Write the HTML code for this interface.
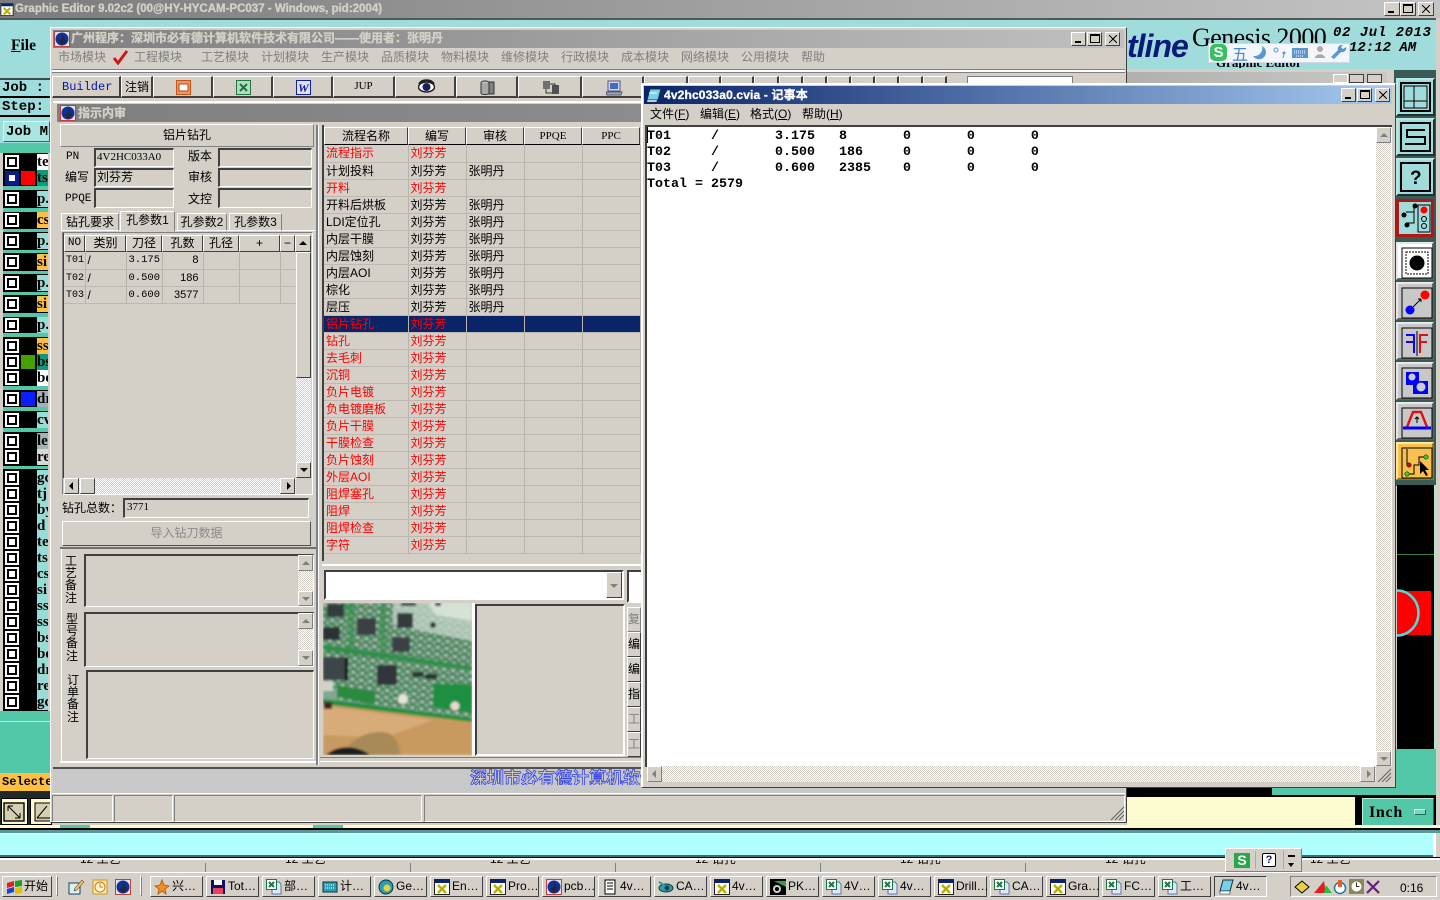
<!DOCTYPE html>
<html><head><meta charset="utf-8"><title>Graphic Editor</title>
<style>
html,body{margin:0;padding:0;width:1440px;height:900px;overflow:hidden;background:#d4d0c8}
body{position:relative;font:12px/14px "Liberation Sans","WenQuanYi Zen Hei","Noto Sans CJK SC",sans-serif;color:#000}
div,span,svg{position:absolute;box-sizing:border-box;white-space:nowrap}
.r{background:#d4d0c8;border:1px solid;border-color:#fff #404040 #404040 #fff}
.s{background:#d4d0c8;border:2px solid;border-color:#808080 #fff #fff #808080}
.sf{background:#d4d0c8;border:1px solid;border-color:#808080 #fff #fff #808080;border-top-width:2px;border-left-width:2px;border-top-color:#404040;border-left-color:#404040}
.d{background:repeating-conic-gradient(#d4d0c8 0 25%,#fff 0 50%) 0 0/2px 2px}
.g{color:#808080}
.tb{background:linear-gradient(90deg,#7f7f7f,#c0c0c0)}
.wb{width:16px;height:14px;background:#d4d0c8;border:1px solid;border-color:#fff #404040 #404040 #fff;text-align:center;color:#000}
.mn::after{content:"";position:absolute;left:3px;top:8px;width:6px;height:2px;background:#000}
.mx::after{content:"";position:absolute;left:2px;top:1px;width:10px;height:9px;box-sizing:border-box;border:1px solid #000;border-top-width:2px}
.cl{background:linear-gradient(45deg,transparent 44%,#000 44%,#000 56%,transparent 56%) 3px 2px/8px 8px no-repeat,linear-gradient(-45deg,transparent 44%,#000 44%,#000 56%,transparent 56%) 3px 2px/8px 8px no-repeat,#d4d0c8}
.lt{font:12px/14px "Liberation Mono","WenQuanYi Zen Hei","Noto Sans CJK SC",monospace}
.ser{font-family:"Liberation Serif","WenQuanYi Zen Hei",serif}
.bd{-webkit-text-stroke:.35px currentColor}
table{position:absolute;border-collapse:collapse;table-layout:fixed}
td{box-sizing:border-box;height:17px;padding:0 0 0 2px;border-right:1px solid #b8b4ac;border-bottom:1px solid #bdb9b1;font:12px/14px "Liberation Sans","WenQuanYi Zen Hei","Noto Sans CJK SC",sans-serif;overflow:hidden;white-space:nowrap}
tr.k td{color:#f00}
tr.sel td{background:#0a246a;color:#f00}
.cb{left:7px;width:10px;height:10px;background:#fff;border:2px solid #000;outline:2px solid #fff}
.lb{left:37px;width:11px;height:16px;overflow:hidden;font:bold 15px/16px "Liberation Serif",serif;color:#000}
.tq{background:#97dcd6}.or{background:#ffc040}.tg{background:#0e9a78}.wh{background:#fff}.gb{background:#a0b4b8}.lg{background:#d8d8d8}
.gap{left:3px;width:45px;background:#52c8a8}
.th{top:235px;height:17px;text-align:center;line-height:15px}
.m{top:50px;color:#808080}
.tbtn{top:76px;height:22px;background:#d4d0c8;border-right:2px solid #404040;border-bottom:2px solid #404040;border-left:1px solid #fff;border-top:1px solid #fff}
.tk{top:876px;width:53px;height:21px;background:#d4d0c8;border:1px solid;border-color:#fff #404040 #404040 #fff;font:12px/19px "Liberation Sans","WenQuanYi Zen Hei",sans-serif}
.tk b{position:absolute;left:21px;top:0;font-weight:normal}
.tk svg{left:3px;top:2px}
.ct{left:1396px;width:39px;height:38px;background:#5a9a96;border:2px solid;border-color:#b8e8e4 #203030 #203030 #b8e8e4}
.tool{left:1396px;width:38px;height:38px;border:2px solid;border-color:#e8e8e8 #606060 #606060 #e8e8e8;background:#c8c8c8}
.tool svg{left:2px;top:2px}
.sb{width:15px;background:#d4d0c8;border:1px solid;border-color:#fff #404040 #404040 #fff}
</style></head><body>
<svg width="0" height="0" style="display:none"><defs>
<symbol id="win" viewBox="0 0 16 16"><rect x=".5" y=".5" width="15" height="15" fill="#fff" stroke="#222"/><rect x="1" y="1" width="14" height="3" fill="#0a246a"/><path d="M4 6l8 8M12 6l-8 8" stroke="#b8b000" stroke-width="2.4"/></symbol>
<symbol id="xls" viewBox="0 0 16 16"><path d="M6 3h7l2 2v10H6z" fill="#dfe8f5" stroke="#5878b0"/><rect x="0.5" y="0.5" width="10" height="10" fill="#fff" stroke="#187840"/><path d="M3 3l5 5M8 3l-5 5" stroke="#187840" stroke-width="2"/></symbol>
<symbol id="globe" viewBox="0 0 16 16"><rect x=".5" y=".5" width="15" height="15" fill="#e8e0e0" stroke="#c04040"/><circle cx="8" cy="8" r="6.5" fill="#1030a0"/><path d="M6 2c2 1 3 3 2 5s-3 1-3 3 2 3 3 4c2-1 4-3 4-5-2-1-2-3-3-5z" fill="#202830"/></symbol>
</defs></svg>

<!-- main title bar -->
<div style="left:0;top:0;width:1440px;height:18px;background:linear-gradient(90deg,#7c7c7c,#c4c4c4)"></div>
<svg style="left:0;top:3px" width="14" height="13"><use href="#win"/></svg>
<div class="bd" style="left:15px;top:2px;font-weight:bold;font-size:11.5px;color:#d4d0c8">Graphic Editor 9.02c2 (00@HY-HYCAM-PC037 - Windows, pid:2004)</div>
<div class="wb mn" style="left:1384px;top:2px"></div><div class="wb mx" style="left:1400px;top:2px"></div><div class="wb cl" style="left:1418px;top:2px"></div>
<div style="left:0;top:18px;width:1440px;height:2px;background:#505858"></div>

<!-- teal app background -->
<div style="left:0;top:20px;width:1440px;height:50px;background:#a0dcdc"></div>
<div style="left:1436px;top:18px;width:4px;height:850px;background:#d4d0c8"></div>

<!-- left strip -->
<div style="left:0;top:20px;width:50px;height:58px;background:#9fdcdc"></div>
<div class="ser" style="left:11px;top:38px;font:bold 15.500px/16px 'Liberation Serif',serif"><u>F</u>ile</div>
<div style="left:0;top:72px;width:50px;height:80px;background:#9fdcdc"></div>
<div style="left:0;top:78px;width:50px;height:2px;background:#404848"></div>
<div style="left:0;top:96px;width:50px;height:2px;background:#000"></div>
<div style="left:0;top:115px;width:50px;height:2px;background:#000"></div>
<div style="left:2px;top:80px;font:bold 14px/16px 'Liberation Mono',serif">Job :</div>
<div style="left:2px;top:99px;font:bold 14px/16px 'Liberation Mono',serif">Step:</div>
<div style="left:3px;top:121px;width:47px;height:21px;background:#a8e4e0;border:1px solid;border-color:#d8f8f4 #406060 #406060 #d8f8f4;overflow:hidden;font:bold 14px/20px 'Liberation Mono',serif;padding-left:2px">Job Mgr</div>
<div style="left:0;top:143px;width:50px;height:10px;background:#52c8a8"></div>

<!-- layer list -->
<div style="left:3px;top:153px;width:45px;height:558px;background:#000"></div>
<div class="gap" style="top:186px;height:4px"></div><div class="gap" style="top:208px;height:4px"></div><div class="gap" style="top:229px;height:3px"></div><div class="gap" style="top:250px;height:3px"></div><div class="gap" style="top:271px;height:3px"></div><div class="gap" style="top:292px;height:3px"></div><div class="gap" style="top:313px;height:4px"></div><div class="gap" style="top:333px;height:4px"></div><div class="gap" style="top:386px;height:4px"></div><div class="gap" style="top:407px;height:4px"></div><div class="gap" style="top:428px;height:4px"></div><div class="gap" style="top:466px;height:3px"></div>
<div style="left:5px;top:171px;width:14px;height:14px;background:#0a1a90"></div>
<div class="cb" style="top:157px"></div><div class="lb wh" style="top:154px">te</div>
<div style="left:7px;top:173px;width:10px;height:10px;background:#fff;border:2px solid #0a1a90"></div><div style="left:21px;top:171px;width:14px;height:14px;background:#f00"></div><div class="lb tg" style="top:170px">ts</div>
<div class="cb" style="top:194px"></div><div class="lb tq" style="top:191px">p.</div>
<div class="cb" style="top:215px"></div><div class="lb or" style="top:212px">cs</div>
<div class="cb" style="top:236px"></div><div class="lb tq" style="top:233px">p.</div>
<div class="cb" style="top:257px"></div><div class="lb or" style="top:254px">si</div>
<div class="cb" style="top:278px"></div><div class="lb tq" style="top:275px">p.</div>
<div class="cb" style="top:299px"></div><div class="lb or" style="top:296px">si</div>
<div class="cb" style="top:320px"></div><div class="lb tq" style="top:317px">p.</div>
<div class="cb" style="top:341px"></div><div class="lb or" style="top:338px">ss</div>
<div class="cb" style="top:357px"></div><div style="left:21px;top:355px;width:14px;height:14px;background:#48a000"></div><div class="lb tg" style="top:354px">bs</div>
<div class="cb" style="top:373px"></div><div class="lb wh" style="top:370px">be</div>
<div class="cb" style="top:394px"></div><div style="left:21px;top:392px;width:14px;height:14px;background:#0820ff"></div><div class="lb gb" style="top:391px">dr</div>
<div class="cb" style="top:415px"></div><div class="lb tq" style="top:412px">cv</div>
<div class="cb" style="top:436px"></div><div class="lb gb" style="top:433px">le</div>
<div class="cb" style="top:452px"></div><div class="lb lg" style="top:449px">re</div>
<div class="cb" style="top:473px"></div><div class="lb tq" style="top:470px">gc</div>
<div class="cb" style="top:489px"></div><div class="lb tq" style="top:486px">tj</div>
<div class="cb" style="top:505px"></div><div class="lb tq" style="top:502px">by</div>
<div class="cb" style="top:521px"></div><div class="lb tq" style="top:518px">d</div>
<div class="cb" style="top:537px"></div><div class="lb tq" style="top:534px">te</div>
<div class="cb" style="top:553px"></div><div class="lb tq" style="top:550px">ts</div>
<div class="cb" style="top:569px"></div><div class="lb tq" style="top:566px">cs</div>
<div class="cb" style="top:585px"></div><div class="lb tq" style="top:582px">si</div>
<div class="cb" style="top:601px"></div><div class="lb tq" style="top:598px">ss</div>
<div class="cb" style="top:617px"></div><div class="lb tq" style="top:614px">ss</div>
<div class="cb" style="top:633px"></div><div class="lb tq" style="top:630px">bs</div>
<div class="cb" style="top:649px"></div><div class="lb tq" style="top:646px">be</div>
<div class="cb" style="top:665px"></div><div class="lb tq" style="top:662px">dr</div>
<div class="cb" style="top:681px"></div><div class="lb tq" style="top:678px">re</div>
<div class="cb" style="top:697px"></div><div class="lb tq" style="top:694px">gc</div>
<div style="left:0;top:711px;width:50px;height:62px;background:#52c8a8"></div>
<div style="left:0;top:721px;width:50px;height:1px;background:#c0f0e0"></div>
<div style="left:0;top:773px;width:50px;height:18px;background:#ffc040;font:bold 12px/18px 'Liberation Mono',serif;padding-left:2px;overflow:hidden">Selected</div>
<div style="left:0;top:791px;width:50px;height:36px;background:#202828"></div>
<div style="left:1px;top:798px;width:27px;height:27px;background:#fdfcd0;border:1px solid #000"></div>
<svg style="left:3px;top:802px" width="22" height="20"><rect x="1" y="1" width="20" height="18" fill="#d4cfb0" stroke="#000" stroke-width="1.4"/><path d="M5 4l12 12M5 4v5M5 4h5M17 16v-5M17 16h-5" fill="none" stroke="#000"/></svg>
<div style="left:30px;top:798px;width:22px;height:27px;background:#fdfcd0;border:1px solid #000"></div>
<svg style="left:34px;top:802px" width="18" height="20"><rect x="1" y="1" width="20" height="18" fill="#d4cfb0" stroke="#000"/><path d="M3 16L13 4M3 16h13" fill="none" stroke="#000"/></svg>

<!-- Genesis logo area -->
<div style="left:1127px;top:28px;font:italic bold 32px/36px 'Liberation Sans',sans-serif;color:#0a1a78;letter-spacing:-1px">tline</div>
<div style="left:1192px;top:23px;font:26px/30px 'Liberation Serif',serif;letter-spacing:-.55px">Genesis 2000</div>
<div style="left:1333px;top:25px;font:italic bold 14px/16px 'Liberation Mono',monospace;letter-spacing:.55px">02 Jul 2013</div>
<div style="left:1349px;top:40px;font:italic bold 14px/16px 'Liberation Mono',monospace">12:12 AM</div>
<div style="left:1216px;top:56px;height:12px;width:90px;font:bold 13px/15px 'Liberation Serif',serif;overflow:hidden"><span style="top:-1px;left:0">Graphic Editor</span></div>
<div style="left:1208px;top:43px;width:142px;height:20px;background:#f3f7fc;border:1px solid #d0d8e8"></div>
<div style="left:1210px;top:44px;width:17px;height:17px;border-radius:5px;background:#38c060;color:#fff;font:bold 15px/17px 'Liberation Sans',sans-serif;text-align:center">S</div>
<div style="left:1232px;top:44px;font:16px/18px 'WenQuanYi Zen Hei','Noto Sans CJK SC',sans-serif;color:#4a88c8">五</div>
<svg style="left:1252px;top:45px" width="96" height="16"><path d="M10 1a7 7 0 1 1-9 10a8 8 0 0 0 9-10z" fill="#5a96d2"/><circle cx="24" cy="5" r="2" fill="none" stroke="#5a96d2"/><circle cx="32" cy="8" r="1.5" fill="#5a96d2"/><path d="M32 9l-1 4" stroke="#5a96d2"/><rect x="40" y="3" width="16" height="10" fill="#5a96d2"/><path d="M42 6h12M42 8h12M44 11h8" stroke="#fff" stroke-dasharray="1 1"/><circle cx="68" cy="4" r="3" fill="#aaa"/><path d="M63 13c0-5 10-5 10 0z" fill="#aaa"/><path d="M82 14l7-7a4 4 0 0 0 5-5l-3 2-2-2 2-2a4 4 0 0 0-5 5l-7 7z" fill="#5a96d2"/></svg>

<!-- right toolbar column -->
<div style="left:1394px;top:70px;width:42px;height:416px;background:#3a5a58"></div>
<div class="ct" style="top:78px;background:#a0dcdc"><svg width="35" height="34"><rect x="3" y="3" width="29" height="28" fill="none" stroke="#000" stroke-width="2"/><rect x="6" y="6" width="23" height="22" fill="none" stroke="#000"/><path d="M16 6v22M6 21h23" stroke="#000"/></svg></div>
<div class="ct" style="top:118px;background:#a0dcdc"><svg width="35" height="34"><rect x="3" y="3" width="29" height="28" fill="none" stroke="#000" stroke-width="2"/><path d="M27 10H9v7h18v7H7" fill="none" stroke="#000" stroke-width="2"/></svg></div>
<div class="ct" style="top:158px;background:#a0dcdc"><svg width="35" height="34"><rect x="3" y="3" width="29" height="28" fill="none" stroke="#000" stroke-width="2"/><text x="12" y="24" font-size="19" font-weight="bold" font-family="Liberation Sans">?</text></svg></div>
<div style="left:1396px;top:199px;width:38px;height:38px;background:#b01818"><div style="left:3px;top:3px;width:32px;height:32px;background:#a0dcdc"></div><svg width="38" height="38"><path d="M18 6v18h-8M10 13h8" fill="none" stroke="#000"/><circle cx="19" cy="7" r="2.5"/><circle cx="8" cy="16" r="2.5"/><circle cx="11" cy="26" r="2.5"/><rect x="22" y="6" width="12" height="27" fill="none" stroke="#000"/><circle cx="28" cy="11" r="3.5" fill="#f00"/><circle cx="28" cy="20" r="2.5" fill="none" stroke="#000"/><circle cx="28" cy="27" r="2.5" fill="none" stroke="#000"/></svg></div>
<div class="tool" style="top:242px;background:#fff"><svg width="34" height="34"><rect x="2" y="2" width="30" height="30" fill="none" stroke="#000"/><rect x="6" y="6" width="22" height="22" fill="none" stroke="#000" stroke-dasharray="2 1"/><circle cx="17" cy="17" r="7.5"/></svg></div>
<div class="tool" style="top:282px"><svg width="34" height="34"><rect x="2" y="2" width="30" height="30" fill="none" stroke="#000"/><circle cx="25" cy="9" r="4.5" fill="#f00"/><circle cx="10" cy="24" r="4.5" fill="#00f"/><path d="M13 21l8-8M21 13h-3M21 13v3" fill="none" stroke="#000"/></svg></div>
<div class="tool" style="top:322px"><svg width="34" height="34"><rect x="2" y="2" width="30" height="30" fill="none" stroke="#000"/><path d="M6 9h9M6 16h9M14 9v18" fill="none" stroke="#10f" stroke-width="2"/><path d="M28 9H20v18M20 16h7" fill="none" stroke="#e01010" stroke-width="2"/><path d="M17 5v25" stroke="#000"/></svg></div>
<div class="tool" style="top:362px"><svg width="34" height="34"><rect x="2" y="2" width="30" height="30" fill="none" stroke="#000"/><path d="M6 6h13v9h9v13H13v-9H6z" fill="#00f"/><circle cx="12" cy="11" r="3.5" fill="#ccc"/><circle cx="21" cy="21" r="4.5" fill="#ccc"/></svg></div>
<div class="tool" style="top:402px"><svg width="34" height="34"><rect x="2" y="2" width="30" height="30" fill="none" stroke="#000"/><path d="M7 21L13 6h8l6 15" fill="none" stroke="#e01010" stroke-width="2.4"/><path d="M3 22h28" stroke="#00f" stroke-width="3"/><path d="M17 17v-6M15 13l2-2 2 2" fill="none" stroke="#000"/></svg></div>
<div class="tool" style="top:442px;background:#f8c050;border-color:#ffe8a0 #a07020 #a07020 #ffe8a0"><svg width="34" height="34"><rect x="2" y="2" width="30" height="30" fill="none" stroke="#000"/><path d="M7 3v16M7 28h7v-9h5v-8h6" fill="none" stroke="#000"/><circle cx="9" cy="19" r="2.2" fill="#c01010" stroke="#000" stroke-width=".5"/><circle cx="7" cy="28" r="2.2" fill="#30d030" stroke="#000" stroke-width=".5"/><circle cx="26" cy="11" r="2.2" fill="#30d030" stroke="#000" stroke-width=".5"/><path d="M20 15l0 13 3-3 3 5 2-1-3-5 4 0z"/></svg></div>
<div style="left:1397px;top:485px;width:37px;height:264px;background:#000"></div>
<div style="left:1434px;top:485px;width:2px;height:264px;background:#a8e8d0"></div>
<div style="left:1397px;top:554px;width:37px;height:1px;background:#3a7a40"></div>
<div style="left:1397px;top:591px;width:34px;height:44px;background:#f00"></div>
<svg style="left:1397px;top:588px" width="24" height="50"><path d="M0 2.500a21 22 0 0 1 0 45" fill="none" stroke="#50d8e0" stroke-width="2.500"/></svg>
<div style="left:1396px;top:749px;width:40px;height:46px;background:#52c8a8"></div>

<!-- bottom right -->
<div style="left:1127px;top:787px;width:145px;height:8px;background:#000"></div>
<div style="left:1272px;top:787px;width:164px;height:8px;background:#52c8a8"></div>
<div style="left:1127px;top:795px;width:309px;height:33px;background:#000"></div>
<div style="left:1127px;top:797px;width:228px;height:31px;background:#fdfcd0"></div>
<div style="left:1362px;top:798px;width:72px;height:28px;background:#52c8a8;border:1px solid;border-color:#b8f0e0 #206858 #206858 #b8f0e0;font:bold 16px/28px 'Liberation Serif',serif;padding-left:6px;letter-spacing:.7px">Inch</div>
<div style="left:1414px;top:809px;width:12px;height:6px;background:#78d8c0;border:1px solid;border-color:#c8f8e8 #206858 #206858 #c8f8e8"></div>

<!-- bottom bands -->
<div style="left:0;top:825px;width:1440px;height:4px;background:#fdfcd0"></div>
<div style="left:60px;top:825px;width:30px;height:4px;background:#52c8a8"></div>
<div style="left:313px;top:825px;width:30px;height:4px;background:#52c8a8"></div>
<div style="left:0;top:828px;width:1440px;height:2px;background:#000"></div>
<div style="left:0;top:830px;width:1440px;height:3px;background:#5a9898"></div>
<div style="left:0;top:833px;width:1433px;height:24px;background:#b0ffff;border-bottom:2px solid #3a7070;border-top:1px solid #e0ffff"></div>
<div style="left:1433px;top:833px;width:3px;height:24px;background:#fff"></div>
<div style="left:0;top:857px;width:1440px;height:1px;background:#000"></div>
<div style="left:0;top:858px;width:1440px;height:2px;background:#fff"></div>
<div style="left:0;top:860px;width:1440px;height:12px;background:#d4d0c8;overflow:hidden">
<span style="left:80px;top:-8px">12 工艺</span><span style="left:285px;top:-8px">12 工艺</span><span style="left:490px;top:-8px">12 工艺</span><span style="left:695px;top:-8px">12 钻孔</span><span style="left:900px;top:-8px">12 钻孔</span><span style="left:1105px;top:-8px">12 钻孔</span><span style="left:1310px;top:-8px">12 工艺</span>
<div style="left:205px;top:3px;width:1px;height:9px;background:#808080"></div><div style="left:410px;top:3px;width:1px;height:9px;background:#808080"></div><div style="left:615px;top:3px;width:1px;height:9px;background:#808080"></div><div style="left:820px;top:3px;width:1px;height:9px;background:#808080"></div><div style="left:1025px;top:3px;width:1px;height:9px;background:#808080"></div>
</div>
<div style="left:0;top:872px;width:1440px;height:1px;background:#fff"></div>

<!-- INNER WINDOW -->
<div style="left:50px;top:27px;width:1077px;height:796px;background:#d4d0c8;border:1px solid;border-color:#fff #404040 #404040 #fff"></div>
<div class="tb" style="left:53px;top:30px;width:1071px;height:18px"></div>
<svg style="left:54px;top:31px" width="16" height="16"><use href="#globe"/></svg>
<div class="bd" style="left:71px;top:31px;font-weight:bold;color:#d4d0c8">广州程序：深圳市必有德计算机软件技术有限公司——使用者：张明丹</div>
<div class="wb mn" style="left:1071px;top:32px;width:15px"></div><div class="wb mx" style="left:1087px;top:32px;width:15px"></div><div class="wb cl" style="left:1105px;top:32px;width:15px"></div>
<div class="m" style="left:58px">市场模块</div>
<svg style="left:113px;top:50px" width="16" height="15"><path d="M1 8l4 5L14 1" fill="none" stroke="#d01818" stroke-width="3"/></svg>
<div class="m" style="left:134px">工程模块</div><div class="m" style="left:201px">工艺模块</div><div class="m" style="left:261px">计划模块</div><div class="m" style="left:321px">生产模块</div><div class="m" style="left:381px">品质模块</div><div class="m" style="left:441px">物料模块</div><div class="m" style="left:501px">维修模块</div><div class="m" style="left:561px">行政模块</div><div class="m" style="left:621px">成本模块</div><div class="m" style="left:681px">网络模块</div><div class="m" style="left:741px">公用模块</div><div class="m" style="left:801px">帮助</div>
<div style="left:52px;top:69px;width:1073px;height:1px;background:#808080"></div>
<div style="left:52px;top:72px;width:1073px;height:1px;background:#808080"></div>
<div style="left:52px;top:70px;width:1073px;height:2px;background:#fff"></div>
<!-- toolbar -->
<div class="tbtn" style="left:52px;width:69px;font:12px/20px 'Liberation Mono',monospace;color:#0018a8;padding-left:9px">Builder</div>
<div class="tbtn" style="left:121px;width:32px;line-height:20px;padding-left:3px">注销</div>
<div class="tbtn" style="left:153px;width:60px"><svg style="left:22px;top:3px" width="15" height="15"><rect x=".5" y=".5" width="14" height="14" fill="#d8a078" stroke="#d05010"/><rect x="3" y="4" width="9" height="7" fill="#fff" stroke="#c04010"/></svg></div>
<div class="tbtn" style="left:213px;width:60px"><svg style="left:22px;top:3px" width="15" height="15"><rect x=".5" y=".5" width="14" height="14" fill="#b8d8c0" stroke="#187840"/><path d="M4 4l7 7M11 4l-7 7" stroke="#187840" stroke-width="2"/></svg></div>
<div class="tbtn" style="left:273px;width:60px"><svg style="left:22px;top:3px" width="15" height="15"><rect x=".5" y=".5" width="14" height="14" fill="#e0e0f8" stroke="#1020a0"/><text x="2" y="12" font-size="12" font-weight="bold" font-style="italic" font-family="Liberation Serif" fill="#1020a0">W</text></svg></div>
<div class="tbtn" style="left:333px;width:62px;font:11px/19px 'Liberation Serif',serif;text-align:center">JUP</div>
<div class="tbtn" style="left:395px;width:61px"><svg style="left:22px;top:2px" width="17" height="16"><ellipse cx="8.5" cy="8" rx="8" ry="5" fill="#fff" stroke="#202020" stroke-width="1.5"/><circle cx="8.5" cy="8" r="4" fill="#182060"/><path d="M1 5c3-5 12-5 15 0" fill="none" stroke="#202020" stroke-width="2"/></svg></div>
<div class="tbtn" style="left:456px;width:62px"><svg style="left:23px;top:3px" width="15" height="15"><ellipse cx="5" cy="3" rx="4" ry="2" fill="#c8c8c8" stroke="#333"/><path d="M1 3v10c0 2 8 2 8 0V3" fill="#a8a8a8" stroke="#333"/><rect x="9" y="2" width="5" height="12" fill="#808080" stroke="#333"/></svg></div>
<div class="tbtn" style="left:518px;width:64px"><svg style="left:24px;top:3px" width="17" height="15"><rect x="0" y="1" width="7" height="8" fill="#707070"/><rect x="9" y="5" width="7" height="9" fill="#505050"/><path d="M3 9v4h6M7 4h5v2" fill="none" stroke="#333"/></svg></div>
<div class="tbtn" style="left:582px;width:62px"><svg style="left:23px;top:3px" width="17" height="16"><rect x="2" y="1" width="12" height="10" fill="#d0d8f0" stroke="#505878"/><rect x="4" y="3" width="8" height="6" fill="#4868c8"/><path d="M0 12h16l-1 3H1z" fill="#a8a8b0" stroke="#505878"/></svg></div>
<div class="tbtn" style="left:644px;width:44px"></div><div class="tbtn" style="left:688px;width:33px"></div><div class="tbtn" style="left:721px;width:33px"></div><div class="tbtn" style="left:754px;width:25px"></div><div class="tbtn" style="left:779px;width:24px"></div><div class="tbtn" style="left:803px;width:24px"></div><div class="tbtn" style="left:827px;width:24px"></div><div class="tbtn" style="left:851px;width:24px"></div><div class="tbtn" style="left:875px;width:24px"></div><div class="tbtn" style="left:899px;width:24px"></div><div class="tbtn" style="left:923px;width:24px"></div>
<div style="left:967px;top:76px;width:106px;height:8px;background:#fff;border:1px solid #808080"></div>
<!-- behind window piece -->
<div style="left:1127px;top:69px;width:267px;height:14px;background:#d4d0c8"></div>
<div style="left:1127px;top:72px;width:260px;height:11px;background:linear-gradient(90deg,#b0b0b0,#c8c8c8)"></div>
<div style="left:1333px;top:74px;width:15px;height:9px;background:#d4d0c8;border:1px solid #fff"></div><div style="left:1349px;top:74px;width:15px;height:9px;background:#d4d0c8;border:1px solid #404040"></div><div style="left:1367px;top:74px;width:15px;height:9px;background:#d4d0c8;border:1px solid #404040"></div>

<!-- SUB WINDOW -->
<div style="left:53px;top:101px;width:590px;height:2px;background:#fff"></div>
<div class="tb" style="left:57px;top:104px;width:590px;height:18px;background:linear-gradient(90deg,#7f7f7f,#8c8c8c)"></div>
<svg style="left:60px;top:105px" width="16" height="16"><use href="#globe"/></svg>
<div class="bd" style="left:78px;top:106px;font-weight:bold;color:#d4d0c8">指示内审</div>

<div class="r" style="left:60px;top:124px;width:254px;height:23px;text-align:center;line-height:21px;border-color:#fff #808080 #808080 #fff">铝片钻孔</div>
<div style="left:66px;top:150px;font:11px/14px 'Liberation Mono',monospace">PN</div>
<div class="sf" style="left:94px;top:148px;width:80px;height:19px;font:11px/15px 'Liberation Serif',serif;padding-left:1px">4V2HC033A0</div>
<div style="left:188px;top:149px">版本</div><div class="sf" style="left:218px;top:148px;width:94px;height:19px"></div>
<div style="left:65px;top:170px">编写</div><div class="sf" style="left:94px;top:168px;width:80px;height:19px;padding-left:1px">刘芬芳</div>
<div style="left:188px;top:170px">审核</div><div class="sf" style="left:218px;top:168px;width:94px;height:19px"></div>
<div style="left:65px;top:192px;font:11px/14px 'Liberation Mono',monospace">PPQE</div><div class="sf" style="left:94px;top:188px;width:80px;height:20px"></div>
<div style="left:188px;top:192px">文控</div><div class="sf" style="left:218px;top:188px;width:94px;height:20px"></div>
<div style="left:61px;top:230px;width:254px;height:1px;background:#fff"></div>
<div style="left:61px;top:213px;width:58px;height:18px;border:1px solid;border-color:#fff #808080 transparent #fff;text-align:center;line-height:16px">钻孔要求</div>
<div style="left:120px;top:211px;width:55px;height:21px;border:1px solid;border-color:#fff #808080 transparent #fff;background:#d4d0c8;text-align:center;line-height:17px">孔参数1</div>
<div style="left:177px;top:213px;width:50px;height:18px;border:1px solid;border-color:#fff #808080 transparent #fff;text-align:center;line-height:16px">孔参数2</div>
<div style="left:229px;top:213px;width:53px;height:18px;border:1px solid;border-color:#fff #808080 transparent #fff;text-align:center;line-height:16px">孔参数3</div>
<div style="left:62px;top:232px;width:251px;height:263px;border:1px solid;border-color:#808080 #fff #fff #808080"></div>
<div style="left:63px;top:233px;width:1px;height:245px;background:#404040"></div>
<div style="left:64px;top:251px;width:232px;height:1px;background:#000"></div>
<div class="r th" style="left:64px;width:21px;font:11px/15px 'Liberation Mono',monospace">NO</div><div class="r th" style="left:85px;width:41px">类别</div><div class="r th" style="left:126px;width:36px">刀径</div><div class="r th" style="left:162px;width:41px">孔数</div><div class="r th" style="left:203px;width:36px">孔径</div><div class="r th" style="left:239px;width:41px">+</div><div class="r th" style="left:280px;width:15px">−</div><div class="r th" style="left:295px;width:16px"><div style="left:3px;top:5px;border:4px solid transparent;border-bottom:4px solid #000;border-top:0"></div></div>
<table style="left:64px;top:252px;width:232px"><colgroup><col width="21"><col width="41"><col width="36"><col width="41"><col width="36"><col width="41"><col width="16"></colgroup>
<tr><td style="font:10px/14px 'Liberation Mono',monospace;padding-top:2px">T01</td><td>/</td><td style="font:10.5px/14px 'Liberation Mono',monospace">3.175</td><td style="text-align:right;padding-right:4px;font-size:11px">8</td><td></td><td></td><td></td></tr>
<tr><td style="font:10px/14px 'Liberation Mono',monospace;padding-top:2px">T02</td><td>/</td><td style="font:10.5px/14px 'Liberation Mono',monospace">0.500</td><td style="text-align:right;padding-right:4px;font-size:11px">186</td><td></td><td></td><td></td></tr>
<tr><td style="font:10px/14px 'Liberation Mono',monospace;padding-top:2px">T03</td><td>/</td><td style="font:10.5px/14px 'Liberation Mono',monospace">0.600</td><td style="text-align:right;padding-right:4px;font-size:11px">3577</td><td></td><td></td><td></td></tr></table>
<div class="r" style="left:296px;top:252px;width:15px;height:126px"></div>
<div class="d" style="left:296px;top:378px;width:15px;height:84px"></div>
<div class="sb" style="left:296px;top:462px;height:16px"><div style="left:3px;top:5px;border:4px solid transparent;border-top:4px solid #000;border-bottom:0"></div></div>
<div class="d" style="left:64px;top:478px;width:232px;height:16px"></div>
<div class="sb" style="left:64px;top:478px;height:16px"><div style="left:4px;top:3px;border:4px solid transparent;border-right:4px solid #000;border-left:0"></div></div>
<div class="sb" style="left:80px;top:478px;height:16px"></div>
<div class="sb" style="left:280px;top:478px;height:16px"><div style="left:6px;top:3px;border:4px solid transparent;border-left:4px solid #000;border-right:0"></div></div>
<div style="left:62px;top:501px">钻孔总数：</div>
<div class="sf" style="left:123px;top:498px;width:186px;height:20px;font:11px/14px 'Liberation Serif',serif;padding-left:2px">3771</div>
<div class="r" style="left:62px;top:521px;width:249px;height:25px;text-align:center;line-height:23px;color:#8a8a8a;border-color:#fff #505050 #505050 #fff">导入钻刀数据</div>
<div style="left:60px;top:547px;width:257px;height:2px;background:#707070"></div>
<div style="left:61px;top:549px;width:1px;height:213px;background:#fff"></div>
<div style="left:60px;top:761px;width:256px;height:2px;background:#fff"></div>
<div style="left:316px;top:125px;width:2px;height:640px;background:#808080"></div>
<div style="left:318px;top:125px;width:1px;height:640px;background:#fff"></div>
<div style="left:64px;top:555px;width:14px;font-size:12px;line-height:12.2px;white-space:normal;text-align:center">工艺备注</div>
<div class="sf" style="left:84px;top:554px;width:230px;height:53px"></div>
<div class="sb" style="left:298px;top:555px;height:16px;border-color:#fff #808080 #808080 #fff"><div style="left:3px;top:5px;border:4px solid transparent;border-bottom:4px solid #808080;border-top:0"></div></div>
<div class="d" style="left:298px;top:571px;width:15px;height:20px"></div>
<div class="sb" style="left:298px;top:591px;height:15px;border-color:#fff #808080 #808080 #fff"><div style="left:3px;top:5px;border:4px solid transparent;border-top:4px solid #808080;border-bottom:0"></div></div>
<div style="left:65px;top:613px;width:14px;font-size:12px;line-height:12.2px;white-space:normal;text-align:center">型号备注</div>
<div class="sf" style="left:84px;top:612px;width:230px;height:55px"></div>
<div class="sb" style="left:298px;top:613px;height:16px;border-color:#fff #808080 #808080 #fff"><div style="left:3px;top:5px;border:4px solid transparent;border-bottom:4px solid #808080;border-top:0"></div></div>
<div class="d" style="left:298px;top:629px;width:15px;height:21px"></div>
<div class="sb" style="left:298px;top:650px;height:16px;border-color:#fff #808080 #808080 #fff"><div style="left:3px;top:5px;border:4px solid transparent;border-top:4px solid #808080;border-bottom:0"></div></div>
<div style="left:66px;top:674px;width:14px;font-size:12px;line-height:12.2px;white-space:normal;text-align:center">订单备注</div>
<div class="sf" style="left:86px;top:670px;width:228px;height:89px"></div>

<!-- process table -->
<div style="left:322px;top:125px;width:2px;height:436px;background:#404040"></div>
<div class="r" style="left:324px;top:127px;width:84px;height:18px;text-align:center;line-height:16px;border-color:#fff #404040 #000 #fff">流程名称</div>
<div class="r" style="left:408px;top:127px;width:58px;height:18px;text-align:center;line-height:16px;border-color:#fff #404040 #000 #fff">编写</div>
<div class="r" style="left:466px;top:127px;width:58px;height:18px;text-align:center;line-height:16px;border-color:#fff #404040 #000 #fff">审核</div>
<div class="r" style="left:524px;top:127px;width:58px;height:18px;text-align:center;font:11px/16px 'Liberation Serif',serif;border-color:#fff #404040 #000 #fff">PPQE</div>
<div class="r" style="left:582px;top:127px;width:58px;height:18px;text-align:center;font:11px/16px 'Liberation Serif',serif;border-color:#fff #404040 #000 #fff">PPC</div>
<table style="left:324px;top:145px;width:316px"><colgroup><col width="84"><col width="58"><col width="58"><col width="58"><col width="58"></colgroup>
<tr class="k"><td>流程指示</td><td>刘芬芳</td><td></td><td></td><td></td></tr>
<tr><td>计划投料</td><td>刘芬芳</td><td>张明丹</td><td></td><td></td></tr>
<tr class="k"><td>开料</td><td>刘芬芳</td><td></td><td></td><td></td></tr>
<tr><td>开料后烘板</td><td>刘芬芳</td><td>张明丹</td><td></td><td></td></tr>
<tr><td>LDI定位孔</td><td>刘芬芳</td><td>张明丹</td><td></td><td></td></tr>
<tr><td>内层干膜</td><td>刘芬芳</td><td>张明丹</td><td></td><td></td></tr>
<tr><td>内层蚀刻</td><td>刘芬芳</td><td>张明丹</td><td></td><td></td></tr>
<tr><td>内层AOI</td><td>刘芬芳</td><td>张明丹</td><td></td><td></td></tr>
<tr><td>棕化</td><td>刘芬芳</td><td>张明丹</td><td></td><td></td></tr>
<tr><td>层压</td><td>刘芬芳</td><td>张明丹</td><td></td><td></td></tr>
<tr class="sel"><td>铝片钻孔</td><td>刘芬芳</td><td></td><td></td><td></td></tr>
<tr class="k"><td>钻孔</td><td>刘芬芳</td><td></td><td></td><td></td></tr>
<tr class="k"><td>去毛刺</td><td>刘芬芳</td><td></td><td></td><td></td></tr>
<tr class="k"><td>沉铜</td><td>刘芬芳</td><td></td><td></td><td></td></tr>
<tr class="k"><td>负片电镀</td><td>刘芬芳</td><td></td><td></td><td></td></tr>
<tr class="k"><td>负电镀磨板</td><td>刘芬芳</td><td></td><td></td><td></td></tr>
<tr class="k"><td>负片干膜</td><td>刘芬芳</td><td></td><td></td><td></td></tr>
<tr class="k"><td>干膜检查</td><td>刘芬芳</td><td></td><td></td><td></td></tr>
<tr class="k"><td>负片蚀刻</td><td>刘芬芳</td><td></td><td></td><td></td></tr>
<tr class="k"><td>外层AOI</td><td>刘芬芳</td><td></td><td></td><td></td></tr>
<tr class="k"><td>阻焊塞孔</td><td>刘芬芳</td><td></td><td></td><td></td></tr>
<tr class="k"><td>阻焊</td><td>刘芬芳</td><td></td><td></td><td></td></tr>
<tr class="k"><td>阻焊检查</td><td>刘芬芳</td><td></td><td></td><td></td></tr>
<tr class="k"><td>字符</td><td>刘芬芳</td><td></td><td></td><td></td></tr>
</table>
<div style="left:322px;top:564px;width:322px;height:2px;background:#fff"></div>
<!-- combo -->
<div style="left:324px;top:570px;width:300px;height:30px;background:#fff;border:2px solid;border-color:#404040 #fff #fff #404040"></div>
<div class="r" style="left:606px;top:572px;width:16px;height:26px;border-color:#fff #404040 #404040 #fff"><div style="left:3px;top:11px;border:4px solid transparent;border-top:4px solid #808080;border-bottom:0"></div></div>
<div style="left:627px;top:570px;width:14px;height:33px;background:#fff;border:2px solid;border-color:#404040 #fff #fff #404040;border-right:0"></div>
<!-- photo -->
<svg style="left:323px;top:603px" width="149" height="152" viewBox="0 0 149 152"><defs><filter id="bl" x="-5%" y="-5%" width="110%" height="110%"><feGaussianBlur stdDeviation="1"/></filter><pattern id="cp" width="9" height="7" patternUnits="userSpaceOnUse" patternTransform="rotate(7)"><rect width="9" height="7" fill="#5f9070"/><rect x="1" y="1" width="3" height="2" fill="#c0d4c4"/><rect x="6" y="4" width="2" height="2" fill="#a8c4b0"/><rect x="5" y="0" width="2" height="1.500" fill="#2e7a48"/><rect x="1" y="5" width="3" height="1.500" fill="#2e7a48"/></pattern></defs>
<g filter="url(#bl)"><rect width="149" height="152" fill="url(#cp)"/>
<path d="M70 0h79v38L100 28 70 22z" fill="#c8d8cc" opacity=".75"/><path d="M105 0h44v18l-36-6z" fill="#e4ece4" opacity=".7"/>
<path d="M0 42L149 63v4L0 47z" fill="#2a9048"/><path d="M0 8L30 0v6L2 14z" fill="#2a9048" opacity=".5"/><path d="M25 0h6v48h-6z" fill="#309048" opacity=".6"/><path d="M57 0h6v50h-6z" fill="#309048" opacity=".6"/>
<path d="M110 80l39 2v28l-39-6z" fill="#1a9040"/>
<path d="M14 82l38 6v14l-38-8z" fill="#2a8a40"/><path d="M0 85h14v12H0z" fill="#80a890"/><path d="M0 78h10v10H0z" fill="#d0d4c8"/>
<rect x="4" y="1" width="17" height="13" fill="#323a3e"/><rect x="34" y="15" width="19" height="17" fill="#3a4044"/><rect x="74" y="10" width="16" height="15" fill="#343a3e"/><rect x="0" y="24" width="17" height="13" fill="#2c3236"/><rect x="69" y="34" width="18" height="15" fill="#3a4044"/><rect x="0" y="54" width="22" height="23" fill="#3e4448"/><rect x="22" y="54" width="3" height="24" fill="#000"/><rect x="54" y="62" width="20" height="20" fill="#30363a"/><rect x="89" y="69" width="12" height="5" fill="#2c3232"/><rect x="102" y="71" width="12" height="5" fill="#2c3232"/><rect x="78" y="0" width="15" height="3" fill="#3a4044"/><rect x="112" y="0" width="6" height="3" fill="#3a4044"/><circle cx="110" cy="22" r="3" fill="#2c3a34"/>
<path d="M0 96L149 115v4L0 104z" fill="#1c9040"/>
<circle cx="80" cy="96" r="5" fill="#e8e4d8"/><circle cx="132" cy="103" r="4.5" fill="#e8d8d4"/>
<path d="M0 101L149 119V152H0z" fill="#c99a5e"/><path d="M0 103L110 117 60 135 0 132z" fill="#d8ac78"/><path d="M20 152c8-18 28-26 45-22 8 4 12 12 12 22z" fill="#a88a58"/><path d="M3 152c8-8 26-12 43-1l1 1z" fill="#1c1c1c"/><rect x="1" y="99" width="8" height="7" fill="#402028"/></g></svg>
<div style="left:472px;top:603px;width:3px;height:153px;background:#fff"></div>
<div style="left:475px;top:604px;width:150px;height:152px;background:#d4d0c8;border:2px solid;border-color:#404040 #fff #fff #404040"></div>
<div class="r g" style="left:627px;top:607px;width:14px;height:25px;line-height:23px;border-color:#fff #808080 #808080 #fff;overflow:hidden">复制</div>
<div class="r" style="left:627px;top:632px;width:14px;height:25px;line-height:23px;overflow:hidden">编辑</div>
<div class="r" style="left:627px;top:657px;width:14px;height:25px;line-height:23px;overflow:hidden">编辑</div>
<div class="r" style="left:627px;top:682px;width:14px;height:25px;line-height:23px;overflow:hidden">指示</div>
<div class="r g" style="left:627px;top:707px;width:14px;height:25px;line-height:23px;overflow:hidden">工艺</div>
<div class="r g" style="left:627px;top:732px;width:14px;height:25px;line-height:23px;overflow:hidden">工程</div>
<div style="left:320px;top:757px;width:330px;height:1px;background:#808080"></div>
<div style="left:320px;top:761px;width:330px;height:1px;background:#fff"></div>
<!-- status -->
<div style="left:53px;top:767px;width:1071px;height:2px;background:#505050"></div>
<div style="left:53px;top:769px;width:1071px;height:24px;background:#c8c8c8"></div>
<div style="left:470px;top:769px;width:171px;height:16px;overflow:hidden;color:#c8c8c8;font:bold 17px/15px 'WenQuanYi Zen Hei','Noto Sans CJK SC',sans-serif;-webkit-text-stroke:.7px #2838f0">深圳市必有德计算机软件</div>
<div style="left:52px;top:793px;width:1073px;height:1px;background:#fff"></div>
<div class="sf" style="left:52px;top:795px;width:61px;height:27px;border:1px solid;border-color:#808080 #fff #fff #808080"></div>
<div class="sf" style="left:114px;top:795px;width:59px;height:27px;border:1px solid;border-color:#808080 #fff #fff #808080"></div>
<div class="sf" style="left:174px;top:795px;width:248px;height:27px;border:1px solid;border-color:#808080 #fff #fff #808080"></div>
<div class="sf" style="left:424px;top:795px;width:701px;height:27px;border:1px solid;border-color:#808080 #fff #fff #808080"></div>
<svg style="left:1110px;top:806px" width="15" height="15"><path d="M14 1L1 14M14 5L5 14M14 9L9 14" stroke="#606060"/></svg>

<!-- NOTEPAD -->
<div style="left:641px;top:83px;width:755px;height:705px;background:#d4d0c8;border:1px solid;border-color:#fff #404040 #404040 #fff;box-shadow:inset 1px 1px 0 #fff"></div>
<div style="left:644px;top:86px;width:748px;height:18px;background:linear-gradient(90deg,#0a246a,#a6caf0)"></div>
<svg style="left:646px;top:87px" width="16" height="16"><path d="M4 2h11l-3 11H1z" fill="#78d0e8" stroke="#103040"/><path d="M3 6h8" stroke="#fff"/><path d="M1 13h10v2H1z" fill="#fff" stroke="#103040" stroke-width=".6"/></svg>
<div class="bd" style="left:664px;top:88px;font-weight:bold;color:#fff;letter-spacing:.15px">4v2hc033a0.cvia - 记事本</div>
<div class="wb mn" style="left:1341px;top:88px;width:15px"></div><div class="wb mx" style="left:1357px;top:88px;width:15px"></div><div class="wb cl" style="left:1375px;top:88px;width:15px"></div>
<div style="left:650px;top:107px">文件(<u>F</u>)</div><div style="left:700px;top:107px">编辑(<u>E</u>)</div><div style="left:750px;top:107px">格式(<u>O</u>)</div><div style="left:802px;top:107px">帮助(<u>H</u>)</div>
<div style="left:645px;top:125px;width:747px;height:642px;background:#fff;border-top:2px solid #404040;border-left:2px solid #404040"></div>
<div style="left:647px;top:127px;width:1px;height:16px;background:#000"></div>
<div style="left:647px;top:129px;font:bold 13.33px/16px 'Liberation Mono',monospace;white-space:pre">T01     /       3.175   8       0       0       0
T02     /       0.500   186     0       0       0
T03     /       0.600   2385    0       0       0
Total = 2579</div>
<div class="d" style="left:1376px;top:127px;width:15px;height:624px"></div>
<div class="sb" style="left:1376px;top:127px;height:16px;border-color:#fff #808080 #808080 #fff"><div style="left:3px;top:5px;border:4px solid transparent;border-bottom:4px solid #808080;border-top:0"></div></div>
<div class="sb" style="left:1376px;top:751px;height:15px;border-color:#fff #808080 #808080 #fff"><div style="left:3px;top:5px;border:4px solid transparent;border-top:4px solid #808080;border-bottom:0"></div></div>
<div class="d" style="left:647px;top:766px;width:729px;height:16px"></div>
<div class="sb" style="left:647px;top:766px;height:16px;border-color:#fff #808080 #808080 #fff"><div style="left:4px;top:3px;border:4px solid transparent;border-right:4px solid #808080;border-left:0"></div></div>
<div class="sb" style="left:1360px;top:766px;height:16px;border-color:#fff #808080 #808080 #fff"><div style="left:6px;top:3px;border:4px solid transparent;border-left:4px solid #808080;border-right:0"></div></div>
<div style="left:1376px;top:766px;width:16px;height:16px;background:#d4d0c8"></div>
<svg style="left:1377px;top:768px" width="15" height="14"><path d="M14 1L1 14M14 5L5 14M14 9L9 14" stroke="#606060"/></svg>

<!-- floating lang bar -->
<div class="r" style="left:1225px;top:848px;width:77px;height:24px;border-color:#fff #808080 #808080 #fff"></div>
<div style="left:1234px;top:853px;width:16px;height:15px;background:#28a848;color:#fff;font:bold 14px/15px 'Liberation Sans',sans-serif;text-align:center">S</div>
<div style="left:1262px;top:853px;width:14px;height:14px;background:#fff;border:1px solid #000;border-radius:2px;font:bold 11px/12px 'Liberation Sans',sans-serif;text-align:center;color:#181880">?</div>
<div style="left:1255px;top:851px;width:1px;height:18px;background:#aaa"></div><div style="left:1283px;top:851px;width:1px;height:18px;background:#aaa"></div>
<div style="left:1288px;top:855px;width:7px;height:2px;background:#000"></div>
<div style="left:1288px;top:863px;border:3px solid transparent;border-top:4px solid #000;border-bottom:0"></div>

<!-- TASKBAR -->
<div class="tk" style="left:2px;width:50px;font-size:12px;padding-left:21px">开始</div>
<svg style="left:6px;top:880px" width="18" height="15"><path d="M1 3l7-2v5l-7 2z" fill="#e02020"/><path d="M9 1l7-1v6l-7 1z" fill="#20a020"/><path d="M1 9l7-2v5l-7 2z" fill="#2040d0"/><path d="M9 8l7-1v6l-7 1z" fill="#e0c000"/></svg>
<div style="left:56px;top:876px;width:2px;height:20px;border:1px solid;border-color:#fff #808080 #808080 #fff"></div>
<svg style="left:68px;top:879px" width="16" height="16"><rect x="1" y="4" width="11" height="11" fill="#d8f0f8" stroke="#204060"/><path d="M7 9l7-8 2 2-7 8-3 1z" fill="#e8c060" stroke="#402000" stroke-width=".5"/></svg>
<svg style="left:92px;top:879px" width="16" height="16"><rect x="1" y="1" width="14" height="14" fill="#ffe8a0" stroke="#c89820"/><circle cx="8" cy="8" r="5" fill="#fff8d0" stroke="#c87820"/><path d="M8 4v4h3" fill="none" stroke="#c87820"/></svg>
<svg style="left:115px;top:879px" width="16" height="16"><use href="#globe"/></svg>
<div style="left:140px;top:876px;width:2px;height:20px;border:1px solid;border-color:#fff #808080 #808080 #fff"></div>
<div class="tk" style="left:150px"><svg width="16" height="16"><path d="M8 1l2 5 5 1-4 3 1 5-4-3-4 3 1-5-4-3 5-1z" fill="#f09020" stroke="#c06010"/></svg><b>兴…</b></div>
<div class="tk" style="left:206px"><svg width="16" height="16"><rect x="1" y="1" width="14" height="14" fill="#101060"/><rect x="4" y="1" width="8" height="5" fill="#fff"/><rect x="3" y="9" width="10" height="6" fill="#f04060"/></svg><b>Tot…</b></div>
<div class="tk" style="left:262px"><svg width="16" height="16"><use href="#xls"/></svg><b>部…</b></div>
<div class="tk" style="left:318px"><svg width="16" height="16"><rect x="1" y="3" width="14" height="10" fill="#30a0b0" stroke="#103040"/><path d="M3 6h10M3 9h10" stroke="#fff" stroke-dasharray="1 1"/></svg><b>计…</b></div>
<div class="tk" style="left:374px"><svg width="16" height="16"><circle cx="8" cy="8" r="7" fill="#28a0b0" stroke="#103040"/><circle cx="9" cy="9" r="3.5" fill="#e8d040"/></svg><b>Ge…</b></div>
<div class="tk" style="left:430px"><svg width="16" height="16"><use href="#win"/></svg><b>En…</b></div>
<div class="tk" style="left:486px"><svg width="16" height="16"><use href="#win"/></svg><b>Pro…</b></div>
<div class="tk" style="left:542px"><svg width="16" height="16"><use href="#globe"/></svg><b>pcb…</b></div>
<div class="tk" style="left:598px"><svg width="16" height="16"><rect x="3" y="1" width="10" height="14" fill="#fff" stroke="#000"/><path d="M5 4h6M5 7h6M5 10h6" stroke="#000"/></svg><b>4v…</b></div>
<div class="tk" style="left:654px"><svg width="16" height="16"><ellipse cx="8" cy="9" rx="7" ry="4" fill="#30a0a0" stroke="#103040"/><circle cx="9" cy="9" r="2.5" fill="#0a4060"/><path d="M1 3l5 3" stroke="#30a0a0" stroke-width="2"/></svg><b>CA…</b></div>
<div class="tk" style="left:710px"><svg width="16" height="16"><use href="#win"/></svg><b>4v…</b></div>
<div class="tk" style="left:766px"><svg width="16" height="16"><rect width="16" height="16" fill="#000"/><path d="M4 2l12 0v6z" fill="#30a040"/><circle cx="7" cy="10" r="4" fill="#d0d0d0"/><circle cx="7" cy="10" r="2" fill="#000"/></svg><b>PK…</b></div>
<div class="tk" style="left:822px"><svg width="16" height="16"><use href="#xls"/></svg><b>4V…</b></div>
<div class="tk" style="left:878px"><svg width="16" height="16"><use href="#xls"/></svg><b>4v…</b></div>
<div class="tk" style="left:934px"><svg width="16" height="16"><use href="#win"/></svg><b>Drill…</b></div>
<div class="tk" style="left:990px"><svg width="16" height="16"><use href="#xls"/></svg><b>CA…</b></div>
<div class="tk" style="left:1046px"><svg width="16" height="16"><use href="#win"/></svg><b>Gra…</b></div>
<div class="tk" style="left:1102px"><svg width="16" height="16"><use href="#xls"/></svg><b>FC…</b></div>
<div class="tk" style="left:1158px"><svg width="16" height="16"><use href="#xls"/></svg><b>工…</b></div>
<div class="tk d" style="left:1214px;border-color:#404040 #fff #fff #404040"><svg width="16" height="16"><path d="M5 1h10l-3 11H2z" fill="#78d0e8" stroke="#103040"/><path d="M2 12h10v3H2z" fill="#fff" stroke="#103040" stroke-width=".6"/></svg><b>4v…</b></div>
<div style="left:1290px;top:876px;width:147px;height:21px;border:1px solid;border-color:#808080 #fff #fff #808080"></div>
<svg style="left:1294px;top:879px" width="90" height="16"><path d="M1 8l7-6 7 6-7 6z" fill="#e8d040" stroke="#000"/><path d="M20 14L30 2l2 12z" fill="#e02020"/><path d="M30 14h8l-6-8z" fill="#20c040"/><circle cx="46" cy="9" r="5.500" fill="#fff" stroke="#1878a0" stroke-width="1.500"/><rect x="44" y="1" width="4" height="7" fill="#e86020"/><rect x="55" y="0" width="15" height="15" fill="#8a8a58"/><circle cx="62.500" cy="7.500" r="5" fill="#fff"/><path d="M62.500 3.500v4h3" fill="none" stroke="#333"/><path d="M73 2l12 12M85 2L73 14" stroke="#682080" stroke-width="2.200"/></svg>
<div style="left:1400px;top:881px">0:16</div>
</body></html>
